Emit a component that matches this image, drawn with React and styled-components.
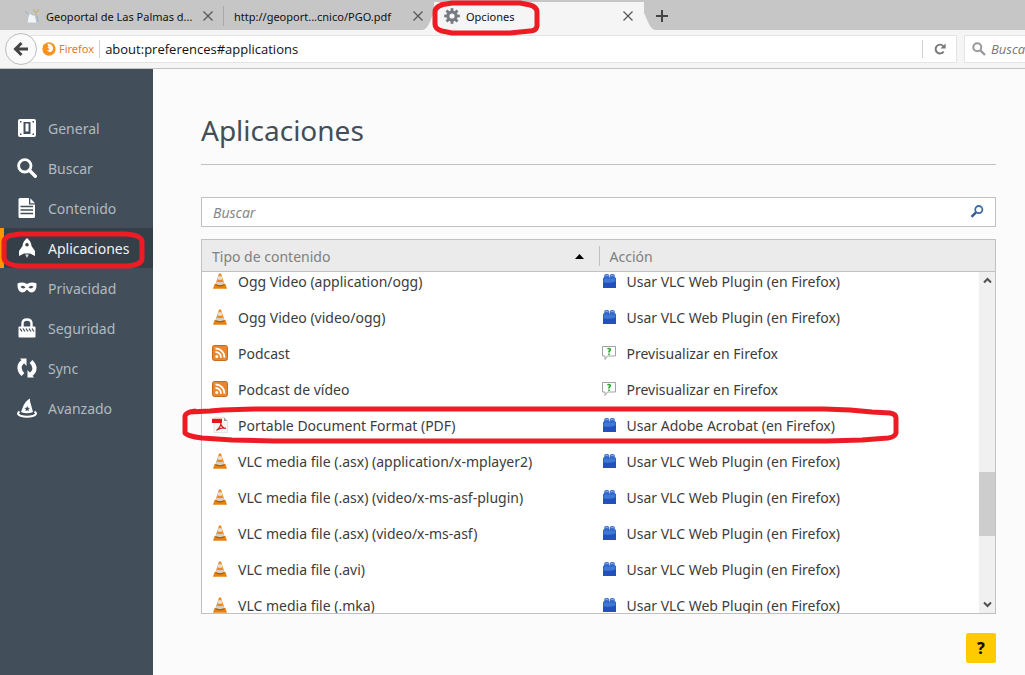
import { useLayoutEffect, useRef } from 'react'
import styled, { createGlobalStyle } from 'styled-components'

const GlobalStyle = createGlobalStyle`
  * {
    box-sizing: border-box;
  }

  body {
    margin: 0;
    font-family: 'Noto Sans', 'Open Sans', sans-serif;
    color: #3c3c3c;
    background: #fbfbfb;
  }

  button,
  input {
    font-family: inherit;
  }
`

const tabs = [
  { title: 'Geoportal de Las Palmas d...', icon: 'map' },
  { title: 'http://geoport...cnico/PGO.pdf' },
  { title: 'Opciones', icon: 'gear', active: true },
]

const categories = [
  { label: 'General', icon: 'general' },
  { label: 'Buscar', icon: 'search' },
  { label: 'Contenido', icon: 'content' },
  { label: 'Aplicaciones', icon: 'rocket', selected: true },
  { label: 'Privacidad', icon: 'mask' },
  { label: 'Seguridad', icon: 'lock' },
  { label: 'Sync', icon: 'sync' },
  { label: 'Avanzado', icon: 'wizard' },
]

const vlc = 'Usar VLC Web Plugin (en Firefox)'
const preview = 'Previsualizar en Firefox'

const handlers = [
  { type: 'Ogg Video (application/ogg)', icon: 'cone', action: vlc, actionIcon: 'plugin' },
  { type: 'Ogg Video (video/ogg)', icon: 'cone', action: vlc, actionIcon: 'plugin' },
  { type: 'Podcast', icon: 'feed', action: preview, actionIcon: 'bubble' },
  { type: 'Podcast de vídeo', icon: 'feed', action: preview, actionIcon: 'bubble' },
  { type: 'Portable Document Format (PDF)', icon: 'pdf', action: 'Usar Adobe Acrobat (en Firefox)', actionIcon: 'plugin' },
  { type: 'VLC media file (.asx) (application/x-mplayer2)', icon: 'cone', action: vlc, actionIcon: 'plugin' },
  { type: 'VLC media file (.asx) (video/x-ms-asf-plugin)', icon: 'cone', action: vlc, actionIcon: 'plugin' },
  { type: 'VLC media file (.asx) (video/x-ms-asf)', icon: 'cone', action: vlc, actionIcon: 'plugin' },
  { type: 'VLC media file (.avi)', icon: 'cone', action: vlc, actionIcon: 'plugin' },
  { type: 'VLC media file (.mka)', icon: 'cone', action: vlc, actionIcon: 'plugin' },
]

const App = () => (
  <Page>
    <GlobalStyle />
    <TabStrip>
      {tabs.map(tab => <BrowserTab key={tab.title} {...tab} />)}
      <NewTab aria-label="Nueva pestaña">
        <Svg size={12} viewBox="0 0 12 12">
          <path d="M6 0v12M0 6h12" stroke="#444" strokeWidth="2" />
        </Svg>
      </NewTab>
    </TabStrip>
    <Toolbar />
    <Columns>
      <Sidebar>
        {categories.map(category => <Category key={category.label} {...category} />)}
      </Sidebar>
      <Main>
        <Title>Aplicaciones</Title>
        <Filter>
          <FilterInput aria-label="Buscar aplicaciones" placeholder="Buscar" type="text" />
          <Svg size={14} viewBox="0 0 14 14">
            <circle cx="8.8" cy="4.6" r="3.6" fill="#fff" stroke="#3a6ea5" strokeWidth="1.8" />
            <path d="M6 7.4L1.5 11.8" stroke="#34588c" strokeWidth="2.4" />
          </Svg>
        </Filter>
        <HandlerList />
        <Help aria-label="Ayuda">?</Help>
      </Main>
    </Columns>
  </Page>
)

const BrowserTab = ({ title, icon, active }) => (
  <Tab $active={active}>
    {active && (
      <>
        <TabEdge $side="left" viewBox="0 0 24 28">
          <path d="M0 28C10 28 10 0 24 0V28Z" fill="#f5f5f5" />
        </TabEdge>
        <TabEdge $side="right" viewBox="0 0 24 28">
          <path d="M24 28C14 28 14 0 0 0V28Z" fill="#f5f5f5" />
        </TabEdge>
      </>
    )}
    {icon && <TabIcon><Icon name={icon} size={16} /></TabIcon>}
    <TabTitle>{title}</TabTitle>
    <TabClose aria-label={`Cerrar ${title}`}>
      <Svg size={10} viewBox="0 0 10 10">
        <path d="M0.5 0.5l9 9M9.5 0.5l-9 9" stroke="#555" strokeWidth="1.2" />
      </Svg>
    </TabClose>
    {active && (
      <TabMark viewBox="0 0 108 36">
        <path d="M8 5L20 3L88 3L98 5Q105 7 105 12L105 26Q104 31 98 31L78 33L20 33L10 31Q3 29 3 24L3 12Q3 7 10 5" />
      </TabMark>
    )}
  </Tab>
)

const Toolbar = () => (
  <Bar>
    <Back aria-label="Atrás">
      <Svg size={16} viewBox="0 0 16 16">
        <path d="M15 8H3M8.5 2L2.5 8l6 6" fill="none" stroke="#444" strokeWidth="3" />
      </Svg>
    </Back>
    <UrlBar>
      <Icon name="firefox" size={14} />
      <Identity>Firefox</Identity>
      <UrlInput aria-label="Dirección" defaultValue="about:preferences#applications" type="text" />
      <Reload aria-label="Recargar">
        <Svg size={12} viewBox="0 0 12 12">
          <path d="M9.6 8.6A4.4 4.4 0 1 1 9.2 3" fill="none" stroke="#777" strokeWidth="1.9" />
          <path d="M11.6 0.4V5.4H6.4Z" fill="#777" />
        </Svg>
      </Reload>
    </UrlBar>
    <WebSearch>
      <Svg size={14} viewBox="0 0 14 14">
        <circle cx="5.3" cy="5.3" r="4" fill="none" stroke="#999" strokeWidth="2" />
        <path d="M8.4 8.4L13 13" stroke="#999" strokeWidth="2.4" />
      </Svg>
      <WebSearchInput aria-label="Buscar en la web" placeholder="Buscar" type="text" />
    </WebSearch>
  </Bar>
)

const Category = ({ label, icon, selected }) => (
  <CategoryLink href={`#${icon}`} $selected={selected}>
    <Icon name={icon} size={20} />
    {label}
    {selected && (
      <CategoryMark viewBox="0 0 146 40">
        <path d="M8 6L20 4L125 4Q142 5 142 12L142 29Q141 35 128 36L20 36Q4 35 4 27L4 12Q4 7 12 5" />
      </CategoryMark>
    )}
  </CategoryLink>
)

const HandlerList = () => {
  const body = useRef(null)

  useLayoutEffect(() => {
    body.current.scrollTop = 9
  }, [])

  return (
    <Panel>
      <Table>
        <Head>
          <HeadRow>
            <HeadCell>
              Tipo de contenido
              <SortArrow viewBox="0 0 9 5"><path d="M0 5L4.5 0L9 5Z" /></SortArrow>
            </HeadCell>
            <HeadCell>Acción</HeadCell>
          </HeadRow>
        </Head>
        <Body ref={body}>
          {handlers.map(({ type, icon, action, actionIcon }) => (
            <Row key={type}>
              <TypeCell><Icon name={icon} size={16} />{type}</TypeCell>
              <ActionCell><Icon name={actionIcon} size={16} />{action}</ActionCell>
            </Row>
          ))}
        </Body>
      </Table>
      <Scrollbar>
        <ScrollButton aria-label="Subir">
          <Svg size={9} viewBox="0 0 9 9"><path d="M1 6.5L4.5 3L8 6.5" fill="none" stroke="#505050" strokeWidth="2" /></Svg>
        </ScrollButton>
        <Track><Thumb /></Track>
        <ScrollButton aria-label="Bajar">
          <Svg size={9} viewBox="0 0 9 9"><path d="M1 2.5L4.5 6L8 2.5" fill="none" stroke="#505050" strokeWidth="2" /></Svg>
        </ScrollButton>
      </Scrollbar>
      <RowMark viewBox="0 0 718 38">
        <path d="M7 6L28 5L40 4L72 3L642 3L668 4L690 6L708 7Q714 8 714 12L714 27Q713 31 706 32L680 34L645 35L92 35L50 34L20 32Q5 30 3 27L3 10Q4 6 14 5" />
      </RowMark>
    </Panel>
  )
}

const drawings = {
  map: (
    <>
      <path d="M3 15L4 9L6 5L8 7L11 7L12 11L13 15Z" fill="#f2f4f5" stroke="#b4c3ce" strokeWidth="0.8" />
      <path d="M9.5 1L11 4L14 3.5L15 1M12 4V8" fill="none" stroke="#c9b06a" />
      <path d="M1 3L4 6M13 8L14 14" stroke="#8fb0cc" />
    </>
  ),
  gear: (
    <>
      {[0, 45, 90, 135].map(angle => (
        <path key={angle} d="M8 0.2V15.8" stroke="#757980" strokeWidth="2.8" transform={`rotate(${angle} 8 8)`} />
      ))}
      <circle cx="8" cy="8" r="5.6" fill="#757980" />
      <circle cx="8" cy="8" r="2.6" fill="#f5f5f5" />
    </>
  ),
  firefox: (
    <>
      <circle cx="8" cy="8" r="7.6" fill="#f7931e" />
      <path d="M6 2.2Q10.5 1.5 12.2 5Q13.5 9 10.5 11Q7.5 12 5.5 9.8Q8 9.8 8.5 8L6 6.5L7.5 5Z" fill="#fff" />
      <path d="M1 4Q3 2.5 5 3.5L7 5L5 7Q5 10 8 11.5Q4 12 1.5 8Z" fill="#f7931e" />
    </>
  ),
  general: (
    <>
      <rect x="1" y="1" width="18" height="18" rx="2" fill="#fff" />
      <path d="M6.5 4h7v12h-7z" fill="#424f5a" />
      <path d="M8.5 5.5h3v8h-3z" fill="#fff" />
      <path d="M3 3h1.5v1.5H3zM15.5 3H17v1.5h-1.5zM3 15.5h1.5V17H3zM15.5 15.5H17V17h-1.5z" fill="#424f5a" />
    </>
  ),
  search: (
    <>
      <circle cx="7.8" cy="7.8" r="6.2" fill="none" stroke="#fff" strokeWidth="2.8" />
      <path d="M12.3 12.3L18.3 18.3" stroke="#fff" strokeWidth="3.4" strokeLinecap="round" />
    </>
  ),
  content: (
    <>
      <path d="M3 0H12V6.5H18V18.5Q18 20 16.5 20H3Q1.5 20 1.5 18.5V1.5Q1.5 0 3 0Z" fill="#fff" />
      <path d="M13.3 0.3L18 5.3H13.3Z" fill="#fff" />
      <path d="M3.5 8.5H16M3.5 12H16M3.5 15.5H16" stroke="#424f5a" strokeWidth="1.4" />
    </>
  ),
  rocket: (
    <>
      <path d="M10 0Q14 3 14.5 8L18 13V18L13 15.5H7L2 18V13L5.5 8Q6 3 10 0Z" fill="#fff" />
      <circle cx="10" cy="6.8" r="1.7" fill="#343f48" />
      <path d="M8.2 16.5H11.8L10 20Z" fill="#ddd" />
    </>
  ),
  mask: (
    <>
      <path d="M0.5 5.5Q5 3.5 10 6Q15 3.5 19.5 5.5Q20 13 15 14.5Q12 14.5 10 11.5Q8 14.5 5 14.5Q0 13 0.5 5.5Z" fill="#fff" />
      <path d="M3.5 9Q6 6.5 8.5 9.5Q6 11.5 3.5 9ZM16.5 9Q14 6.5 11.5 9.5Q14 11.5 16.5 9Z" fill="#424f5a" />
    </>
  ),
  lock: (
    <>
      <path d="M5.5 9V5.5Q5.5 1.5 10 1.5Q14.5 1.5 14.5 5.5V9" fill="none" stroke="#fff" strokeWidth="2.4" />
      <rect x="1.5" y="8.5" width="17" height="11" rx="1" fill="#fff" />
      <path d="M3 10.5l2 3M6 10.5l2 3M9 10.5l2 3M12 10.5l2 3M15 10.5l2 3" stroke="#424f5a" strokeWidth="1.3" />
    </>
  ),
  sync: (
    <>
      <path d="M7.5 3Q2.5 5 2.5 10Q3 14 6 16.5" fill="none" stroke="#fff" strokeWidth="4.2" />
      <path d="M12.5 17Q17.5 15 17.5 10Q17 6 14 3.5" fill="none" stroke="#fff" strokeWidth="4.2" />
      <path d="M3 0.5H9.5V8ZM17 19.5H10.5V12Z" fill="#fff" />
    </>
  ),
  wizard: (
    <>
      <path d="M13 0.5Q12.5 3 13.8 6L16 14Q10 16.5 4 14L6.5 7.5Q9 2.5 13 0.5Z" fill="#fff" />
      <path d="M2.5 13.5Q-1 16 3.5 17.8Q10 19.8 16.5 17.8Q21 16 17.5 13.5" fill="none" stroke="#fff" strokeWidth="2" />
      <path d="M10.2 8l0.8 1.8 1.9 0.2-1.4 1.3 0.4 1.9-1.7-1-1.7 1 0.4-1.9-1.4-1.3 1.9-0.2z" fill="#424f5a" />
    </>
  ),
  cone: (
    <>
      <path d="M2.6 11H13.4L15 15.8H1Z" fill="#e8820c" />
      <path d="M7 0.5H9L12.8 12Q8 14 3.2 12Z" fill="#ef8a1d" />
      <path d="M6.4 3.2H9.6L10.6 6.2Q8 7.2 5.4 6.2Z" fill="#dfe2e5" />
      <path d="M4.6 8.6Q8 9.8 11.4 8.6L12.2 11Q8 12.8 3.8 11Z" fill="#cfd3d7" />
      <path d="M3.5 11.8Q8 14.2 12.5 11.8" fill="none" stroke="#a84f08" />
    </>
  ),
  feed: (
    <>
      <rect x="0.5" y="0.5" width="15" height="15" rx="2" fill="#e8872f" stroke="#c86a1a" />
      <circle cx="4.8" cy="11.5" r="1.5" fill="#fff" />
      <path d="M3.5 7A5.5 5.5 0 0 1 9 12.8M3.5 3.5A9 9 0 0 1 12.5 12.8" fill="none" stroke="#fff" strokeWidth="1.8" />
    </>
  ),
  pdf: (
    <>
      <path d="M2 0.5H12L15.5 4V15.5H2Z" fill="#f5f5f5" stroke="#dedede" strokeWidth="0.8" />
      <path d="M12 0.5V4H15.5Z" fill="#9aa0a6" />
      <path d="M0 1.8H10V6H0Z" fill="#e01818" />
      <path d="M4.5 13.5Q9 10 8.8 6M8.8 7Q10 11 14 11.5M5 13Q9 10.5 13.5 11" fill="none" stroke="#d32525" strokeWidth="1.2" />
    </>
  ),
  plugin: (
    <>
      <rect x="2.2" y="1" width="5" height="5" rx="1.8" fill="#3f74d2" />
      <rect x="7.8" y="1" width="5" height="5" rx="1.8" fill="#3f74d2" />
      <path d="M1 5.5Q1 4.5 2 4.5H13Q14 4.5 14 5.5V15H1Z" fill="#2250bd" />
      <path d="M1.5 5.2H13.5V8.5Q8 10.5 1.5 9.5Z" fill="#3c78d4" />
      <path d="M3.3 2.5H6.2M8.9 2.5H11.8" stroke="#7fa8ea" strokeWidth="1.2" />
    </>
  ),
  bubble: (
    <>
      <path d="M0.5 1.5H13.5V11H5.5L3 14.5V11H0.5Z" fill="#fff" stroke="#a3a3a3" />
      <path d="M5.5 4.2Q7 2.8 8.3 4.2Q8.5 5.5 7 6.5V7.5M7 8.5V10" fill="none" stroke="#2fa62f" strokeWidth="1.6" />
    </>
  ),
}

const Icon = ({ name, size }) => (
  <Svg size={size} viewBox={size === 20 ? '0 0 20 20' : '0 0 16 16'}>{drawings[name]}</Svg>
)

const Svg = styled.svg.attrs(({ size }) => ({ width: size, height: size, 'aria-hidden': true }))`
  display: block;
  flex: none;
`

const Page = styled.div`
  display: flex;
  flex-direction: column;
  height: 100vh;
  min-height: 480px;
  overflow: hidden;
`

const PlainButton = styled.button`
  display: flex;
  align-items: center;
  justify-content: center;
  padding: 0;
  border: 0;
  background: none;
`

const TabStrip = styled.div`
  display: flex;
  flex: none;
  height: 30px;
  padding-left: 14px;
  background: #c6c6c6;
`

const Tab = styled.div`
  position: relative;
  display: flex;
  align-items: center;
  gap: 6px;
  width: 210px;
  height: ${props => props.$active ? '28px' : '32px'};
  margin-top: ${props => props.$active ? '2px' : '0'};
  padding: 0 11px 0 10px;
  font-size: 11px;
  color: #111;
  background: ${props => props.$active ? '#f5f5f5' : 'none'};

  &:first-child::after {
    content: '';
    position: absolute;
    right: 0;
    top: 6px;
    width: 1px;
    height: 20px;
    background: #a9a9a9;
  }
`

const TabEdge = styled.svg`
  position: absolute;
  top: 0;
  ${props => props.$side}: -12px;
  width: 24px;
  height: 28px;
`

/* keeps the icon above the curved tab edge */
const TabIcon = styled.span`
  position: relative;
  flex: none;
`

const TabTitle = styled.span`
  position: relative;
  flex: 1;
  white-space: nowrap;
`

const TabClose = styled(PlainButton)`
  position: relative;
`

const NewTab = styled(PlainButton)`
  width: 36px;
  height: 32px;
`

const Mark = styled.svg`
  position: absolute;
  z-index: 2;
  fill: none;
  stroke: #ed1c24;
  stroke-width: 5;
  stroke-linejoin: round;
  pointer-events: none;
`

const TabMark = styled(Mark)`
  top: -2px;
  left: -2px;
  width: 108px;
  height: 36px;
`

const Bar = styled.div`
  display: flex;
  flex: none;
  align-items: center;
  height: 39px;
  padding-left: 5px;
  background: #f5f5f5;
  border-bottom: 1px solid #c4c4c4;
`

const Back = styled(PlainButton)`
  position: relative;
  flex: none;
  width: 32px;
  height: 32px;
  border: 1px solid #bdbdbd;
  border-radius: 50%;
  background: #fafafa;
`

const UrlBar = styled.div`
  display: flex;
  flex: 1;
  align-items: center;
  height: 28px;
  margin-left: -8px;
  padding-left: 12px;
  background: #fff;
  border: 1px solid #e4e4e4;
`

const Identity = styled.span`
  margin-left: 3px;
  padding-right: 5px;
  font-size: 11px;
  line-height: 18px;
  color: #e8791b;
  border-right: 1px solid #d0d0d0;
`

const UrlInput = styled.input`
  flex: 1;
  min-width: 0;
  padding: 0 5px;
  border: 0;
  outline: 0;
  font-family: 'Open Sans', sans-serif;
  font-size: 13px;
  color: #111;
  background: none;
`

const Reload = styled(PlainButton)`
  width: 34px;
  height: 18px;
  border-left: 1px solid #d0d0d0;
`

const WebSearch = styled.div`
  display: flex;
  flex: none;
  align-items: center;
  gap: 5px;
  width: 61px;
  height: 28px;
  margin-left: 7px;
  padding-left: 7px;
  background: #fff;
  border: 1px solid #e4e4e4;
  border-right: 0;
`

const WebSearchInput = styled.input`
  width: 34px;
  padding: 0;
  border: 0;
  outline: 0;
  font-family: 'Open Sans', sans-serif;
  font-size: 13px;
  background: none;

  &::placeholder {
    color: #777;
    font-style: italic;
  }
`

const Columns = styled.div`
  display: flex;
  flex: 1;
  min-height: 0;
`

const Sidebar = styled.nav`
  flex: none;
  width: 153px;
  padding-top: 39px;
  background: #424f5a;
`

const CategoryLink = styled.a`
  position: relative;
  display: flex;
  align-items: center;
  gap: 11px;
  height: 40px;
  padding-left: 13px;
  border-left: 4px solid ${props => props.$selected ? '#ff9500' : 'transparent'};
  font-size: 14px;
  text-decoration: none;
  color: ${props => props.$selected ? '#f2f2f2' : '#b3b9be'};
  background: ${props => props.$selected ? '#343f48' : 'none'};
`

const CategoryMark = styled(Mark)`
  top: 2px;
  left: -4px;
  width: 146px;
  height: 40px;
`

const Main = styled.main`
  display: flex;
  flex: 1;
  flex-direction: column;
  min-width: 0;
  padding: 40px 29px 12px 48px;
`

const Title = styled.h1`
  margin: 0 0 32px;
  padding-bottom: 12px;
  border-bottom: 1px solid #c1c1c1;
  font-size: 28px;
  font-weight: 400;
  line-height: 43px;
  color: #424e5a;
`

const Filter = styled.div`
  display: flex;
  flex: none;
  align-items: center;
  height: 30px;
  margin-bottom: 12px;
  padding: 0 11px;
  background: #fff;
  border: 1px solid #c1c1c1;
`

const FilterInput = styled.input`
  flex: 1;
  padding: 0;
  border: 0;
  outline: 0;
  font-size: 14px;
  background: none;

  &::placeholder {
    color: #888;
    font-style: italic;
  }
`

const Panel = styled.div`
  position: relative;
  display: flex;
  flex: 1;
  min-height: 0;
  background: #fff;
  border: 1px solid #c1c1c1;
`

const Table = styled.table`
  display: flex;
  flex: 1;
  flex-direction: column;
  font-size: 14px;
`

const Head = styled.thead`
  display: block;
  flex: none;
  background: #ebebeb;
  border-bottom: 1px solid #c1c1c1;
`

const HeadRow = styled.tr`
  display: grid;
  grid-template-columns: 1fr 1fr;
  padding: 6px 0 5px;
`

const HeadCell = styled.th`
  display: flex;
  align-items: center;
  justify-content: space-between;
  height: 20px;
  padding: 0 15px 0 10px;
  font-weight: 400;
  color: #808080;

  & + & {
    border-left: 1px solid #c1c1c1;
  }
`

const SortArrow = styled.svg`
  width: 9px;
  height: 5px;
  fill: #000;
`

const Body = styled.tbody`
  display: block;
  flex: 1;
  min-height: 0;
  overflow-y: auto;
  scrollbar-width: none;
`

const Row = styled.tr`
  display: grid;
  grid-template-columns: 1fr 1fr;
  height: 36px;
`

const Cell = styled.td`
  display: flex;
  align-items: center;
  white-space: nowrap;
`

const TypeCell = styled(Cell)`
  gap: 10px;
  padding: 0 0 0 10px;
`

const ActionCell = styled(Cell)`
  gap: 9px;
  padding: 0 0 0 3px;
`

const Scrollbar = styled.div`
  position: absolute;
  top: 32px;
  right: 0;
  bottom: 0;
  display: flex;
  flex-direction: column;
  width: 16px;
  background: #f0f0f0;
`

const ScrollButton = styled(PlainButton)`
  height: 17px;
`

const Track = styled.div`
  display: flex;
  flex: 1;
  flex-direction: column;
  justify-content: flex-end;
  padding-bottom: 60px;
`

const Thumb = styled.div`
  height: 64px;
  background: #cdcdcd;
`

const RowMark = styled(Mark)`
  top: 166px;
  left: -20px;
  width: 718px;
  height: 38px;
`

const Help = styled(PlainButton)`
  align-self: flex-end;
  flex: none;
  width: 30px;
  height: 30px;
  margin-top: 19px;
  border-radius: 2px;
  font-size: 16px;
  font-weight: 800;
  color: #111;
  background: #ffcb00;
`

export default App
